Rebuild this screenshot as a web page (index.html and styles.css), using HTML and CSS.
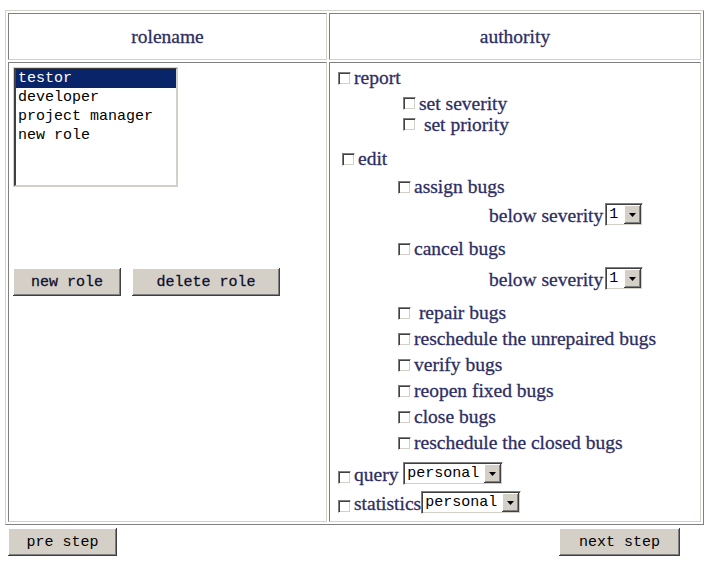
FILE: index.html
```html
<!DOCTYPE html>
<html>
<head>
<meta charset="utf-8">
<title>role authority</title>
<link rel="stylesheet" href="styles.css">
</head>
<body>
<div class="page">
  <div class="grid">
    <div class="cell head">rolename</div>
    <div class="cell head">authority</div>

    <div class="cell roles">
      <div class="listbox">
        <div class="opt sel">testor</div>
        <div class="opt">developer</div>
        <div class="opt">project manager</div>
        <div class="opt">new role</div>
      </div>
      <div class="role-actions">
        <button class="btn btn-new">new role</button>
        <button class="btn btn-del">delete role</button>
      </div>
    </div>

    <div class="cell perms">
      <div class="perm"><input type="checkbox" class="cb"><span>report</span></div>
      <div class="report-subs">
        <div class="perm perm-sm"><input type="checkbox" class="cb"><span>set severity</span></div>
        <div class="perm perm-sm"><input type="checkbox" class="cb"><span>&nbsp;set priority</span></div>
      </div>
      <div class="perm perm-edit"><input type="checkbox" class="cb"><span>edit</span></div>
      <div class="edit-subs">
        <div class="perm mt-6"><input type="checkbox" class="cb"><span>assign bugs</span></div>
        <div class="sev mt-5"><span class="sev-label">below severity</span><span class="combo combo-num"><span class="combo-text">1</span><span class="combo-btn"><svg width="7" height="4" viewBox="0 0 7 4"><path d="M0 0h7L3.5 4z" fill="#000"/></svg></span></span></div>
        <div class="perm mt-12"><input type="checkbox" class="cb"><span>cancel bugs</span></div>
        <div class="sev mt-7"><span class="sev-label">below severity</span><span class="combo combo-num"><span class="combo-text">1</span><span class="combo-btn"><svg width="7" height="4" viewBox="0 0 7 4"><path d="M0 0h7L3.5 4z" fill="#000"/></svg></span></span></div>
        <div class="perm perm-line mt-10"><input type="checkbox" class="cb"><span>&nbsp;repair bugs</span></div>
        <div class="perm perm-line"><input type="checkbox" class="cb"><span>reschedule the unrepaired bugs</span></div>
        <div class="perm perm-line"><input type="checkbox" class="cb"><span>verify bugs</span></div>
        <div class="perm perm-line"><input type="checkbox" class="cb"><span>reopen fixed bugs</span></div>
        <div class="perm perm-line"><input type="checkbox" class="cb"><span>close bugs</span></div>
        <div class="perm perm-line"><input type="checkbox" class="cb"><span>reschedule the closed bugs</span></div>
      </div>
      <div class="pick mt-6"><input type="checkbox" class="cb"><span class="pick-label">query&nbsp;</span><span class="combo combo-wide"><span class="combo-text">personal</span><span class="combo-btn"><svg width="7" height="4" viewBox="0 0 7 4"><path d="M0 0h7L3.5 4z" fill="#000"/></svg></span></span></div>
      <div class="pick mt-6"><input type="checkbox" class="cb"><span class="pick-label">statistics</span><span class="combo combo-wide"><span class="combo-text">personal</span><span class="combo-btn"><svg width="7" height="4" viewBox="0 0 7 4"><path d="M0 0h7L3.5 4z" fill="#000"/></svg></span></span></div>
    </div>
  </div>

  <div class="steps">
    <button class="btn btn-pre">pre step</button>
    <button class="btn btn-next">next step</button>
  </div>
</div>
</body>
</html>
```
FILE: styles.css
```css
html, body {
  margin: 0;
  background: #fff;
}

.page {
  padding: 10px 0 0 5px;
}

.grid {
  display: grid;
  grid-template-columns: 319px 372px;
  grid-template-rows: 47px 460px;
  gap: 2px;
  padding: 2px;
  width: max-content;
  border: 1px solid;
  border-color: #d4d0c8 #808080 #808080 #d4d0c8;
}

.cell {
  box-sizing: border-box;
  border: 1px solid;
  border-color: #808080 #d4d0c8 #d4d0c8 #808080;
  padding: 4px;
  font-family: "Liberation Serif", "Times New Roman", serif;
  font-size: 19.5px;
  color: #2e2e62;
  -webkit-text-stroke: 0.3px #2e2e62;
}

.head {
  display: flex;
  align-items: center;
  justify-content: center;
}

/* role list */
.listbox {
  box-sizing: border-box;
  width: 163px;
  height: 118px;
  margin: 1px 0 0 1px;
  outline: 1px solid #d4d0c8;
  border-style: solid;
  border-width: 1px 1px 1px 2px;
  border-color: #404040 #d4d0c8 #d4d0c8 #404040;
  box-shadow: inset 0 1px #808080;
  background: #fff;
  font-family: "Liberation Mono", "Courier New", monospace;
  font-size: 15px;
  color: #000;
  -webkit-text-stroke: 0;
}

.opt {
  height: 19px;
  line-height: 20px;
  padding-left: 2px;
  white-space: pre;
}

.opt.sel {
  background: #0a246a;
  color: #fff;
}

.role-actions {
  display: flex;
  gap: 11px;
  margin-top: 82px;
}

/* buttons */
.btn {
  height: 28px;
  padding: 0;
  border: 0;
  background: #d4d0c8;
  color: #000;
  font-family: "Liberation Mono", "Courier New", monospace;
  font-size: 15px;
  box-shadow: inset -1px -1px #404040, inset 1px 1px #ffffff, inset -2px -2px #808080, inset 2px 2px #d4d0c8;
}

.btn-new { width: 108px; }
.btn-del { width: 148px; }
.btn-pre { width: 109px; }
.btn-next { width: 121px; }

.steps {
  display: flex;
  justify-content: space-between;
  width: 672px;
  margin: 3px 0 0 3px;
}

/* permissions */
.cb {
  -webkit-appearance: none;
  appearance: none;
  box-sizing: border-box;
  flex: none;
  width: 13px;
  height: 13px;
  margin: 0 3px 0 4px;
  border: 1px solid;
  border-color: #808080 #ffffff #ffffff #808080;
  box-shadow: inset 1px 1px #404040, inset -1px -1px #d4d0c8;
  background: #fff;
}

.perm {
  display: flex;
  align-items: center;
  height: 22px;
  line-height: 22px;
  white-space: pre;
}

.perm-sm {
  height: 21px;
  line-height: 21px;
}

.perm-line {
  height: 26px;
  line-height: 26px;
}

.report-subs {
  margin-top: 4px;
  padding-left: 65px;
}

.perm-edit {
  margin-top: 13px;
  padding-left: 4px;
}

.edit-subs {
  padding-left: 60px;
}

.sev {
  display: flex;
  align-items: flex-end;
  height: 23px;
  padding-left: 95px;
}

.sev-label,
.pick-label {
  line-height: 20px;
  white-space: pre;
}

.pick {
  display: flex;
  align-items: flex-end;
  height: 23px;
}

.pick .cb {
  margin-bottom: 1px;
}

.mt-5 { margin-top: 5px; }
.mt-6 { margin-top: 6px; }
.mt-7 { margin-top: 7px; }
.mt-10 { margin-top: 10px; }
.mt-12 { margin-top: 12px; }

/* combo box */
.combo {
  box-sizing: border-box;
  display: flex;
  height: 23px;
  margin-left: 2px;
  padding: 1px;
  border: 1px solid;
  border-color: #808080 #ffffff #ffffff #808080;
  box-shadow: inset 1px 1px #404040, inset -1px -1px #d4d0c8;
  background: #fff;
  font-family: "Liberation Mono", "Courier New", monospace;
  font-size: 15px;
  color: #000;
  -webkit-text-stroke: 0;
}

.pick .combo {
  margin-left: 0;
}

.combo-num { width: 38px; }
.combo-wide { width: 100px; }

.combo-text {
  flex: 1;
  padding-left: 2px;
  line-height: 19px;
}

.combo-btn {
  box-sizing: border-box;
  flex: none;
  width: 17px;
  height: 19px;
  display: flex;
  align-items: center;
  justify-content: center;
  background: #d4d0c8;
  box-shadow: inset -1px -1px #404040, inset 1px 1px #ffffff, inset -2px -2px #808080;
}
```
